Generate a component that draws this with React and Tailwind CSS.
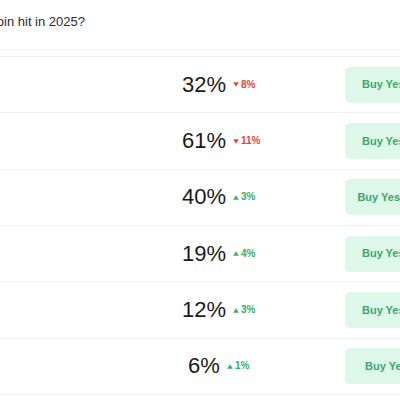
import React from "react"

const rows = [
  { pct: 32, change: 8, up: false, price: "32¢" },
  { pct: 61, change: 11, up: false, price: "61¢" },
  { pct: 40, change: 3, up: true, price: "40.5¢" },
  { pct: 19, change: 4, up: true, price: "19¢" },
  { pct: 12, change: 3, up: true, price: "12¢" },
  { pct: 6, change: 1, up: true, price: "6¢" },
]

function Triangle({ up }) {
  return (
    <svg width="6" height="5" viewBox="0 0 6 5" className="shrink-0">
      {up ? (
        <path d="M3 0.2 L5.8 4.8 L0.2 4.8 Z" fill="currentColor" />
      ) : (
        <path d="M0.2 0.2 L5.8 0.2 L3 4.8 Z" fill="currentColor" />
      )}
    </svg>
  )
}

function OutcomeRow({ row }) {
  return (
    <div className="flex items-center h-[56.35px] border-b border-[#f0f0f0] shrink-0">
      {/* percent column */}
      <div className="ml-[164px] w-[80px] shrink-0 flex justify-center">
        <span className="relative text-[22px] leading-none text-[#1a1a1a]">
          {row.pct}%
          <span
            className={`absolute left-full top-1/2 -translate-y-1/2 ml-[7px] flex items-center gap-[2px] text-[10px] font-bold whitespace-nowrap ${
              row.up ? "text-[#33ad6a]" : "text-[#e0483c]"
            }`}
          >
            <Triangle up={row.up} />
            {row.change}%
          </span>
        </span>
      </div>

      {/* buy button */}
      <button className="ml-[101px] shrink-0 w-[98px] h-[36px] rounded-[5px] bg-[#ddf7e8] text-[#3ba66c] text-[11px] font-bold flex items-center justify-center whitespace-nowrap">
        Buy Yes {row.price}
      </button>
    </div>
  )
}

export default function App() {
  return (
    <div
      className="w-[400px] h-[400px] overflow-hidden bg-white flex flex-col"
      style={{ fontFamily: "'Liberation Sans', Arial, sans-serif" }}
    >
      <div className="h-[50px] shrink-0 border-b border-[#f3f3f3] flex items-center pb-[5px]">
        <div className="w-[85px] shrink-0 flex justify-end">
          <span className="whitespace-nowrap text-[13px] text-[#2a2a2a]">
            What price will Bitcoin hit in 2025?
          </span>
        </div>
      </div>
      <div className="h-[7px] shrink-0 border-b border-[#f0f0f0]" />
      {rows.map((row, i) => (
        <OutcomeRow key={i} row={row} />
      ))}
    </div>
  )
}
